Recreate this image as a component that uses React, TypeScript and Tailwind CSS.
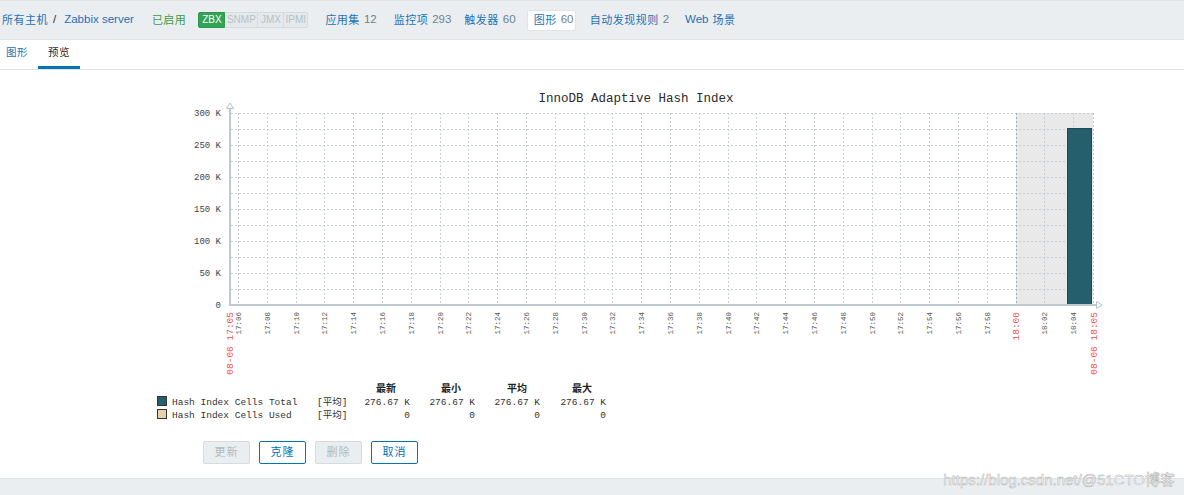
import React from 'react';

const cjk = '"Liberation Sans", Arial, "Noto Sans CJK SC", sans-serif';
const mono = '"Liberation Mono", "Noto Sans CJK SC", monospace';

// chart geometry in page pixels
const top = 113;
const base = 305;
const left = 230;
const right = 1093;
const step = 28.8;

const ticks = Array.from({ length: 30 }, (_, k) => {
  const min = 6 + k * 2;
  const label = min < 60 ? `17:${String(min).padStart(2, '0')}` : `18:${String(min - 60).padStart(2, '0')}`;
  return { x: Math.round(238 + step * k), label };
});

const yLabels = ['300 K', '250 K', '200 K', '150 K', '100 K', '50 K', '0'];

function Chart() {
  return (
    <svg
      className="ml-[140px] block"
      width={980}
      height={360}
      viewBox="140 70 980 360"
      style={{ fontFamily: mono }}
    >
      <text x={636} y={102} textAnchor="middle" fontSize={12.5} fill="#2a2a2a">
        InnoDB Adaptive Hash Index
      </text>

      {/* shaded period */}
      <rect x={1016} y={top} width={right - 1016} height={base - top} fill="#e9e9e9" />

      {/* horizontal grid */}
      {Array.from({ length: 12 }, (_, k) => (
        <line
          key={k}
          x1={231}
          x2={right}
          y1={top + 16 * k + 0.5}
          y2={top + 16 * k + 0.5}
          stroke="#c6ced4"
          strokeDasharray="2 2"
        />
      ))}
      <line x1={right + 0.5} x2={right + 0.5} y1={top} y2={base} stroke="#c6ced4" strokeDasharray="2 2" />

      {/* vertical grid */}
      {ticks.map((t, k) => (
        <line
          key={t.label}
          x1={t.x + 0.5}
          x2={t.x + 0.5}
          y1={top}
          y2={base}
          stroke={k === 27 ? '#9fb0bd' : '#c6ced4'}
          strokeDasharray="2 2"
        />
      ))}

      {/* bar */}
      <rect x={1067.5} y={128.5} width={24} height={base - 128.5} fill="#255f6b" stroke="#1c4b55" />

      {/* axes */}
      <line x1={left} x2={left} y1={108} y2={306} stroke="#bfcad0" strokeWidth={2} />
      <line x1={left - 1} x2={1096} y1={305} y2={305} stroke="#bfcad0" strokeWidth={2} />
      <polygon points="230,103 226.5,108.5 233.5,108.5" fill="#fff" stroke="#b5c2c9" />
      <polygon points="1102,305 1096.5,301.5 1096.5,308.5" fill="#fff" stroke="#b5c2c9" />

      {/* y labels */}
      {yLabels.map((l, k) => (
        <text key={l} x={221} y={top + 32 * k + 3} textAnchor="end" fontSize={9} fill="#444">
          {l}
        </text>
      ))}

      {/* x labels */}
      {ticks.map((t, k) =>
        k === 27 ? null : (
          <text
            key={t.label}
            x={t.x + 3}
            y={312}
            transform={`rotate(-90 ${t.x + 3} 312)`}
            textAnchor="end"
            fontSize={7.5}
            fill="#555"
          >
            {t.label}
          </text>
        ),
      )}
      {[
        { x: 229, label: '08-06 17:05' },
        { x: 1015, label: '18:00' },
        { x: 1093, label: '08-06 18:05' },
      ].map((t) => (
        <text
          key={t.label}
          x={t.x + 3.5}
          y={312}
          transform={`rotate(-90 ${t.x + 3.5} 312)`}
          textAnchor="end"
          fontSize={9.5}
          fill="#ef5350"
        >
          {t.label}
        </text>
      ))}

      {/* legend */}
      {[
        { x: 386, l: '最新' },
        { x: 451, l: '最小' },
        { x: 517, l: '平均' },
        { x: 582, l: '最大' },
      ].map((h) => (
        <text key={h.l} x={h.x} y={392} textAnchor="middle" fontSize={10} fill="#222" fontWeight={700}>
          {h.l}
        </text>
      ))}
      {[
        { y: 405, color: '#255f6b', name: 'Hash Index Cells Total', v: '276.67 K' },
        { y: 418, color: '#e3d2ac', name: 'Hash Index Cells Used', v: '0' },
      ].map((r) => (
        <g key={r.name} fontSize={9.5} fill="#333">
          <rect x={157.5} y={r.y - 8.5} width={9} height={9} fill={r.color} stroke="#333" />
          <text x={172} y={r.y}>{r.name}</text>
          <text x={317} y={r.y}>[平均]</text>
          {[410, 475, 540, 606].map((x) => (
            <text key={x} x={x} y={r.y} textAnchor="end">
              {r.v}
            </text>
          ))}
        </g>
      ))}
    </svg>
  );
}

function NavItem({ label, count, className = '' }: { label: string; count?: string; className?: string }) {
  return (
    <a className={`flex items-center gap-[4px] text-[#1f71b4] ${className}`}>
      <span className="text-[11px] tracking-[0.5px]">{label}</span>
      {count && <span className="text-[#6f828c] text-[11.5px]">{count}</span>}
    </a>
  );
}

export default function App() {
  return (
    <div className="h-[495px] w-[1184px] bg-white flex flex-col overflow-hidden relative" style={{ fontFamily: cjk }}>
      {/* host header */}
      <div className="h-[40px] shrink-0 bg-[#ebeef0] border-t border-[#d3d9dc] border-b border-[#dfe4e7] flex items-center text-[11.5px] pl-[2px]">
        <span className="text-[#1f71b4] text-[11px] tracking-[0.5px]">所有主机</span>
        <span className="ml-[5px] text-[#1f2c33]">/</span>
        <span className="ml-[8px] text-[#1f71b4]">Zabbix server</span>
        <span className="ml-[18px] text-[#3c9c45] text-[11px] tracking-[0.5px]">已启用</span>
        <div className="ml-[12px] flex h-[16px] text-[10px] leading-[14px] text-center">
          <span className="w-[27px] bg-[#31a454] border border-[#2c9a4c] text-white rounded-l-[2px]">ZBX</span>
          <span className="w-[33px] bg-[#e5e9eb] border border-[#d5dbde] border-l-0 text-[#b6c2c8]">SNMP</span>
          <span className="w-[26px] bg-[#e5e9eb] border border-[#d5dbde] border-l-0 text-[#b6c2c8]">JMX</span>
          <span className="w-[24px] bg-[#e5e9eb] border border-[#d5dbde] border-l-0 text-[#b6c2c8] rounded-r-[2px]">IPMI</span>
        </div>
        <NavItem label="应用集" count="12" className="ml-[17px]" />
        <NavItem label="监控项" count="293" className="ml-[17px]" />
        <NavItem label="触发器" count="60" className="ml-[13px]" />
        <div className="ml-[11px] h-[21px] w-[49px] pl-[6px] bg-white border border-[#dfe4e7] rounded-[2px] flex items-center">
          <NavItem label="图形" count="60" />
        </div>
        <NavItem label="自动发现规则" count="2" className="ml-[14px]" />
        <a className="ml-[16px] text-[#1f71b4] flex items-center gap-[4px]">
          <span>Web</span>
          <span className="text-[11px] tracking-[0.5px]">场景</span>
        </a>
      </div>

      {/* tabs */}
      <div className="h-[30px] shrink-0 border-b border-[#dfe4e7] flex text-[10.5px] tracking-[0.5px]">
        <a className="pl-[6px] pr-[10px] flex items-center text-[#1f71b4] border-b-[3px] border-transparent">图形</a>
        <a className="px-[10px] flex items-center text-[#1f2c33] border-b-[3px] border-[#0275b8]">预览</a>
      </div>

      {/* content */}
      <div className="flex-1">
        <Chart />
        <div className="mt-[11px] ml-[203px] flex gap-[9px] text-[11px] tracking-[1px]">
          <button className="w-[47px] h-[23px] rounded-[2px] bg-[#ebeef0] border border-[#d5dbde] text-[#acbbc2]">更新</button>
          <button className="w-[47px] h-[23px] rounded-[2px] bg-white border border-[#0275b8] text-[#0275b8]">克隆</button>
          <button className="w-[47px] h-[23px] rounded-[2px] bg-[#ebeef0] border border-[#d5dbde] text-[#acbbc2]">删除</button>
          <button className="w-[47px] h-[23px] rounded-[2px] bg-white border border-[#0275b8] text-[#0275b8]">取消</button>
        </div>
      </div>

      {/* footer */}
      <div className="h-[17px] shrink-0 bg-[#ebeef0] border-t border-[#dfe4e7]" />

      {/* watermark */}
      <div className="absolute right-[9px] bottom-[4px] text-[15px] text-[#fbfbfb] [-webkit-text-stroke:0.5px_#b4b4b4] pointer-events-none">
        https://blog.csdn.net/@51CTO博客
      </div>
    </div>
  );
}
